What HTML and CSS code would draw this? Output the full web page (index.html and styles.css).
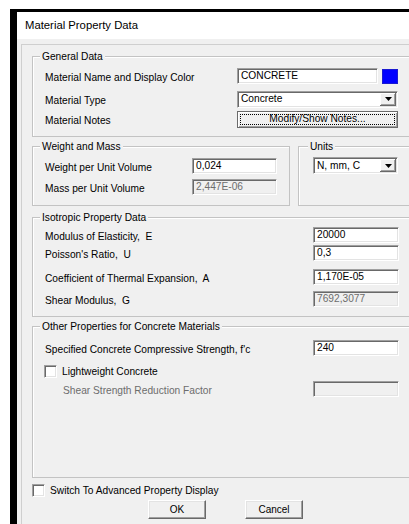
FILE: index.html
```html
<!DOCTYPE html>
<html>
<head>
<meta charset="utf-8">
<title>Material Property Data</title>
<link rel="stylesheet" href="styles.css">
</head>
<body>
<div class="window">
  <div class="titlebar">Material Property Data</div>
  <div class="client">
    <div class="frame">

      <div class="group g-general">
        <div class="group-title">General Data</div>
        <div class="row r1">
          <span class="lbl">Material Name and Display Color</span>
          <span class="field w-name">CONCRETE</span>
          <span class="swatch"></span>
        </div>
        <div class="row r2">
          <span class="lbl">Material Type</span>
          <span class="combo w-type"><span class="combo-text">Concrete</span><span class="combo-btn"><svg width="7" height="4" viewBox="0 0 7 4"><path d="M0 0h7L3.5 4z" fill="#000"/></svg></span></span>
        </div>
        <div class="row r3">
          <span class="lbl">Material Notes</span>
          <span class="btn btn-default w-notes"><span class="focus">Modify/Show Notes...</span></span>
        </div>
      </div>

      <div class="pair">
        <div class="group g-weight">
          <div class="group-title">Weight and Mass</div>
          <div class="row r1">
            <span class="lbl">Weight per Unit Volume</span>
            <span class="field w-small">0,024</span>
          </div>
          <div class="row r2">
            <span class="lbl">Mass per Unit Volume</span>
            <span class="field disabled w-small">2,447E-06</span>
          </div>
        </div>
        <div class="group g-units">
          <div class="group-title">Units</div>
          <span class="combo w-units"><span class="combo-text">N, mm, C</span><span class="combo-btn"><svg width="7" height="4" viewBox="0 0 7 4"><path d="M0 0h7L3.5 4z" fill="#000"/></svg></span></span>
        </div>
      </div>

      <div class="group g-iso">
        <div class="group-title">Isotropic Property Data</div>
        <div class="row r1">
          <span class="lbl">Modulus of Elasticity,&nbsp; E</span>
          <span class="field w-right">20000</span>
        </div>
        <div class="row r2">
          <span class="lbl">Poisson's Ratio,&nbsp; U</span>
          <span class="field w-right">0,3</span>
        </div>
        <div class="row r3">
          <span class="lbl">Coefficient of Thermal Expansion,&nbsp; A</span>
          <span class="field w-right">1,170E-05</span>
        </div>
        <div class="row r4">
          <span class="lbl">Shear Modulus,&nbsp; G</span>
          <span class="field disabled w-right">7692,3077</span>
        </div>
      </div>

      <div class="group g-other">
        <div class="group-title">Other Properties for Concrete Materials</div>
        <div class="row r1">
          <span class="lbl">Specified Concrete Compressive Strength, f'c</span>
          <span class="field w-right">240</span>
        </div>
        <div class="row r2 check-row">
          <span class="checkbox"></span>
          <span class="check-label">Lightweight Concrete</span>
        </div>
        <div class="row r3">
          <span class="lbl sub muted">Shear Strength Reduction Factor</span>
          <span class="field disabled w-right"></span>
        </div>
      </div>

      <div class="row switch-row check-row">
        <span class="checkbox"></span>
        <span class="check-label">Switch To Advanced Property Display</span>
      </div>

      <div class="actions">
        <span class="btn push">OK</span>
        <span class="btn push">Cancel</span>
      </div>

    </div>
  </div>
</div>
</body>
</html>
```

FILE: styles.css
```css
* {
  box-sizing: border-box;
}

html,
body {
  margin: 0;
  padding: 0;
}

body {
  width: 409px;
  height: 524px;
  overflow: hidden;
  background: #ffffff;
  font-family: "Liberation Sans", Arial, sans-serif;
  font-size: 10.2px;
  color: #000000;
}

/* dialog window, right side runs past the viewport */
.window {
  margin: 9px 0 0 10px;
  width: 480px;
  border-top: 3px solid #000000;
  border-left: 7px solid #000000;
}

.titlebar {
  height: 27px;
  line-height: 27px;
  padding-left: 8px;
  background: #ffffff;
  font-size: 11.3px;
  color: #000000;
}

.client {
  height: 600px;
  padding: 5px 0 0 4px;
  background: #f0f0f0;
}

.frame {
  height: 100%;
  padding: 11px 10px 0 10px;
  border-top: 1px solid #cfcfcf;
  border-left: 1px solid #cfcfcf;
}

/* group boxes */
.group {
  border: 1px solid #c3c3c3;
  box-shadow: inset 1px 1px 0 #ffffff;
  padding: 0 0 0 12px;
}

.group-title {
  width: max-content;
  height: 13px;
  margin: -7px 0 0 -5px;
  padding: 0 2px;
  line-height: 13px;
  background: #f0f0f0;
}

.row {
  display: flex;
  align-items: center;
  height: 16px;
}

.lbl {
  flex: none;
  padding-top: 2px;
  white-space: nowrap;
}

.muted {
  color: #6d6d6d;
}

/* sunken edit field */
.field {
  flex: none;
  height: 16px;
  line-height: 12px;
  padding: 1px 3px 0;
  background: #ffffff;
  border-style: solid;
  border-width: 1px;
  border-color: #a0a0a0 #ffffff #ffffff #a0a0a0;
  box-shadow: inset 1px 1px 0 #696969, inset -1px -1px 0 #e3e3e3;
  white-space: nowrap;
  overflow: hidden;
}

.field.disabled {
  background: #f0f0f0;
  color: #6d6d6d;
}

.swatch {
  flex: none;
  width: 16px;
  height: 15px;
  margin-left: 4px;
  background: #0000ff;
  border: 1px solid #1a1ad0;
}

/* drop-down list */
.combo {
  flex: none;
  display: flex;
  align-items: center;
  height: 17px;
  padding: 2px;
  background: #ffffff;
  border-style: solid;
  border-width: 1px;
  border-color: #a0a0a0 #ffffff #ffffff #a0a0a0;
  box-shadow: inset 1px 1px 0 #696969, inset -1px -1px 0 #e3e3e3;
}

.combo-text {
  flex: 1;
  padding-left: 1px;
  line-height: 12px;
  white-space: nowrap;
}

.combo-btn {
  flex: none;
  display: flex;
  align-items: center;
  justify-content: center;
  width: 16px;
  height: 13px;
  margin-right: -1px;
  background: #f0f0f0;
  box-shadow: inset -1px -1px 0 #696969, inset 1px 1px 0 #ffffff, inset -2px -2px 0 #a0a0a0;
}

.combo-btn svg {
  display: block;
}

/* push buttons */
.btn {
  flex: none;
  display: flex;
  align-items: center;
  justify-content: center;
  background: #f0f0f0;
  white-space: nowrap;
}

.push {
  width: 58px;
  height: 19px;
  border-style: solid;
  border-width: 1px;
  border-color: #ffffff #696969 #696969 #ffffff;
  box-shadow: inset -1px -1px 0 #a0a0a0, inset 1px 1px 0 #e3e3e3;
  font-size: 10px;
}

.btn-default {
  border: 1px solid #6a6a6a;
  box-shadow: inset 1px 1px 0 #ffffff, inset -1px -1px 0 #a0a0a0;
  padding: 2px;
}

.focus {
  display: flex;
  align-items: center;
  justify-content: center;
  width: 100%;
  height: 100%;
  border: 1px dotted #000000;
  line-height: 10px;
}

/* check boxes */
.checkbox {
  flex: none;
  width: 13px;
  height: 13px;
  background: #ffffff;
  border-style: solid;
  border-width: 1px;
  border-color: #a0a0a0 #ffffff #ffffff #a0a0a0;
  box-shadow: inset 1px 1px 0 #696969, inset -1px -1px 0 #e3e3e3;
}

.check-row {
  height: 13px;
}

.check-label {
  margin-left: 5px;
  white-space: nowrap;
}

/* General Data */
.g-general .lbl {
  width: 192px;
}

.g-general .r1 {
  margin-top: 5px;
}

.g-general .r2 {
  margin-top: 7px;
}

.g-general .r3 {
  margin-top: 4px;
}

.g-general {
  padding-bottom: 9px;
}

.w-name {
  width: 141px;
}

.w-type {
  width: 161px;
}

.w-notes {
  width: 161px;
  height: 17px;
}

/* Weight and Mass / Units */
.pair {
  display: flex;
  gap: 8px;
  margin-top: 9px;
}

.g-weight {
  flex: none;
  width: 258px;
  padding-bottom: 10px;
}

.g-weight .lbl {
  width: 147px;
}

.g-weight .r1 {
  margin-top: 5px;
}

.g-weight .r2 {
  margin-top: 5px;
}

.w-small {
  width: 85px;
}

.g-units {
  flex: 1;
  padding-left: 14px;
}

.g-units .combo {
  margin-top: 4px;
}

.w-units {
  width: 85px;
}

/* Isotropic Property Data */
.g-iso {
  margin-top: 11px;
  padding-bottom: 9px;
}

.g-iso .lbl,
.g-other .lbl {
  width: 268px;
}

.g-iso .r1 {
  margin-top: 3px;
}

.g-iso .r2 {
  margin-top: 2px;
}

.g-iso .r3 {
  margin-top: 8px;
}

.g-iso .r4 {
  margin-top: 6px;
}

.w-right {
  width: 86px;
}

/* Other Properties */
.g-other {
  margin-top: 9px;
  padding-bottom: 80px;
}

.g-other .r1 {
  margin-top: 7px;
}

.g-other .r2 {
  margin-top: 9px;
  margin-left: -1px;
}

.g-other .r3 {
  margin-top: 3px;
}

.g-other .lbl.sub {
  width: 250px;
  margin-left: 18px;
}

/* bottom controls */
.switch-row {
  margin-top: 6px;
}

.actions {
  display: flex;
  gap: 39px;
  margin-top: 3px;
  padding-left: 116px;
}
```
